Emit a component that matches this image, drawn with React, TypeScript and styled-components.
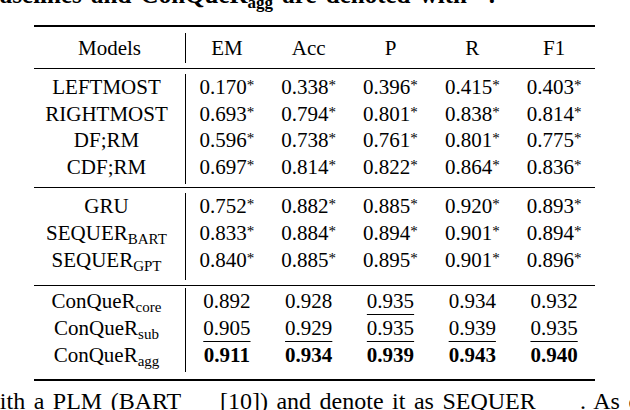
import React from "react";
import styled, { createGlobalStyle } from "styled-components";

const SERIF = `"Liberation Serif", "DejaVu Serif", "Times New Roman", Times, serif`;

const Global = createGlobalStyle`
  html, body {
    margin: 0;
    padding: 0;
    background: #ffffff;
    width: 630px;
    height: 410px;
    overflow: hidden;
  }
  body {
    font-family: ${SERIF};
    color: #000;
  }
`;

const Page = styled.div`
  width: 630px;
  height: 410px;
  overflow: hidden;
  display: flex;
  flex-direction: column;
  font-family: ${SERIF};
`;

const CaptionBox = styled.div`
  height: 25px;
  flex-shrink: 0;
  box-sizing: border-box;
  padding-right: 135px;
  display: flex;
  justify-content: flex-end;
  overflow: hidden;
`;

const CaptionText = styled.div`
  margin-top: -18.5px;
  font-size: 25px;
  line-height: 25px;
  font-weight: 700;
  white-space: nowrap;
  word-spacing: 3px;
  flex-shrink: 0;
`;

const Table = styled.div`
  margin-left: 34px;
  width: 561px;
  flex-shrink: 0;
  border-top: 2px solid #000;
  border-bottom: 2px solid #000;
`;

const Section = styled.div<{ $pt: number; $pb: number; $rule: boolean }>`
  display: flex;
  padding: ${(p) => p.$pt}px 0 ${(p) => p.$pb}px;
  border-bottom: ${(p) => (p.$rule ? "1px solid #000" : "none")};
`;

const NameCol = styled.div<{ $ib: number }>`
  width: 152px;
  flex-shrink: 0;
  box-sizing: border-box;
  border-right: 1px solid #000;
  padding-bottom: ${(p) => p.$ib}px;
`;

const ValueGrid = styled.div`
  flex: 1;
  display: grid;
  grid-template-columns: repeat(5, 1fr);
  align-content: start;
`;

const Cell = styled.div<{ $h: number; $bold?: boolean }>`
  height: ${(p) => p.$h}px;
  line-height: ${(p) => p.$h}px;
  font-size: 21px;
  text-align: center;
  white-space: nowrap;
  font-weight: ${(p) => (p.$bold ? 700 : 400)};
`;

const NameCell = styled(Cell)`
  padding-right: 6px;
`;

const Num = styled.span<{ $u?: boolean }>`
  text-decoration: ${(p) => (p.$u ? "underline" : "none")};
  text-decoration-thickness: 1px;
  text-underline-offset: 6px;
`;

const Star = styled.span`
  font-size: 15px;
  line-height: 0;
  vertical-align: 4px;
`;

const Sub = styled.span<{ $drop?: number; $size?: number }>`
  font-size: ${(p) => p.$size ?? 15}px;
  line-height: 0;
  vertical-align: ${(p) => -(p.$drop ?? 4)}px;
`;

const BodyLine = styled.div`
  margin-top: 7px;
  font-size: 24px;
  line-height: 27px;
  white-space: nowrap;
  text-indent: -17.5px;
  word-spacing: 2.5px;
`;

type Val = { v: string; u?: boolean };
type Row = { name: string; sub?: string; vals: Val[]; star?: boolean; bold?: boolean };
type Group = { pt: number; pb: number; ib: number; rh: number; rule: boolean; rows: Row[] };

const v = (s: string): Val => ({ v: s });
const u = (s: string): Val => ({ v: s, u: true });

const groups: Group[] = [
  {
    pt: 5,
    pb: 3.7,
    ib: 3,
    rh: 26.7,
    rule: true,
    rows: [
      { name: "LEFTMOST", star: true, vals: ["0.170", "0.338", "0.396", "0.415", "0.403"].map(v) },
      { name: "RIGHTMOST", star: true, vals: ["0.693", "0.794", "0.801", "0.838", "0.814"].map(v) },
      { name: "DF;RM", star: true, vals: ["0.596", "0.738", "0.761", "0.801", "0.775"].map(v) },
      { name: "CDF;RM", star: true, vals: ["0.697", "0.814", "0.822", "0.864", "0.836"].map(v) },
    ],
  },
  {
    pt: 4.2,
    pb: 5.3,
    ib: 6,
    rh: 27,
    rule: true,
    rows: [
      { name: "GRU", star: true, vals: ["0.752", "0.882", "0.885", "0.920", "0.893"].map(v) },
      { name: "SEQUER", sub: "BART", star: true, vals: ["0.833", "0.884", "0.894", "0.901", "0.894"].map(v) },
      { name: "SEQUER", sub: "GPT", star: true, vals: ["0.840", "0.885", "0.895", "0.901", "0.896"].map(v) },
    ],
  },
  {
    pt: 2.4,
    pb: 7.5,
    ib: 2.6,
    rh: 27,
    rule: false,
    rows: [
      { name: "ConQueR", sub: "core", vals: [v("0.892"), v("0.928"), u("0.935"), v("0.934"), v("0.932")] },
      { name: "ConQueR", sub: "sub", vals: [u("0.905"), u("0.929"), u("0.935"), u("0.939"), u("0.935")] },
      { name: "ConQueR", sub: "agg", bold: true, vals: ["0.911", "0.934", "0.939", "0.943", "0.940"].map(v) },
    ],
  },
];

const headers = ["EM", "Acc", "P", "R", "F1"];

export default function App() {
  return (
    <Page>
      <Global />
      <CaptionBox>
        <CaptionText>
          over the best baselines and ConQueR<Sub $size={17} $drop={5}>agg</Sub> are denoted
          with *.
        </CaptionText>
      </CaptionBox>
      <Table>
        <Section $pt={6} $pb={5} $rule={true}>
          <NameCol $ib={0}>
            <Cell $h={30}>Models</Cell>
          </NameCol>
          <ValueGrid>
            {headers.map((h) => (
              <Cell key={h} $h={30}>
                {h}
              </Cell>
            ))}
          </ValueGrid>
        </Section>
        {groups.map((g, gi) => (
          <Section key={gi} $pt={g.pt} $pb={g.pb} $rule={g.rule}>
            <NameCol $ib={g.ib}>
              {g.rows.map((r, ri) => (
                <NameCell key={ri} $h={g.rh}>
                  {r.name}
                  {r.sub && <Sub>{r.sub}</Sub>}
                </NameCell>
              ))}
            </NameCol>
            <ValueGrid>
              {g.rows.map((r, ri) =>
                r.vals.map((val, ci) => (
                  <Cell key={`${ri}-${ci}`} $h={g.rh} $bold={r.bold}>
                    <Num $u={val.u}>{val.v}</Num>
                    {r.star && <Star>*</Star>}
                  </Cell>
                ))
              )}
            </ValueGrid>
          </Section>
        ))}
      </Table>
      <BodyLine>
        with a PLM (BART<Sub $size={17} $drop={13}>base</Sub> [10]) and denote it as SEQUER
        <Sub $size={17} $drop={13}>BART</Sub>. As can be seen
      </BodyLine>
    </Page>
  );
}
